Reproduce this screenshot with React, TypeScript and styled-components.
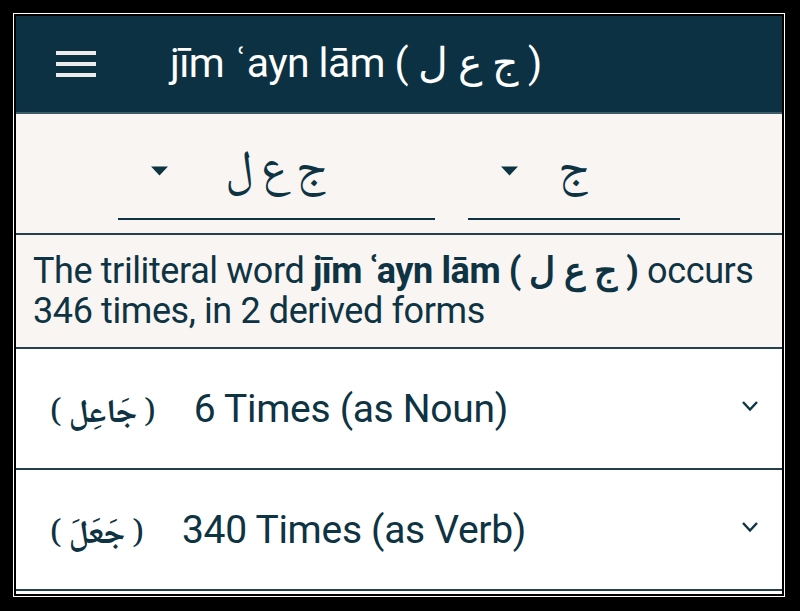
import React from "react";
import styled, { createGlobalStyle } from "styled-components";

const Global = createGlobalStyle`
  html, body { margin: 0; padding: 0; background: #000; }
  body { width: 800px; height: 611px; overflow: hidden; font-family: Roboto, "Noto Sans", sans-serif; }
`;

const INK = "#0e3342";
const ARABIC = `"Noto Naskh Arabic", "Noto Sans Arabic", "DejaVu Sans", serif`;

const Frame = styled.div`
  margin: 13px;
  width: 772px;
  height: 584px;
  box-sizing: border-box;
  border: 1px solid #fff;
  padding: 2px;
  background: #000;
`;

const Screen = styled.div`
  height: 100%;
  display: flex;
  flex-direction: column;
  background: #fff;
  overflow: hidden;
`;

const Header = styled.header`
  height: 98px;
  flex: none;
  box-sizing: border-box;
  background: #0b3142;
  border-bottom: 2px solid #3e5b68;
  display: flex;
  align-items: center;
  padding-left: 40px;
  gap: 74px;
`;

const Title = styled.h1`
  margin: 0 0 2px;
  color: #fff;
  font-family: Roboto, sans-serif;
  font-weight: 400;
  font-size: 41px;
  letter-spacing: -0.6px;
`;

const Selectors = styled.section`
  height: 121px;
  flex: none;
  box-sizing: border-box;
  background: #f8f5f2;
  border-bottom: 2px solid #23404c;
  display: flex;
  justify-content: center;
  align-items: flex-end;
  gap: 33px;
  padding-bottom: 13px;
`;

const Dropdown = styled.div<{ $w: number }>`
  width: ${(p) => p.$w}px;
  height: 82px;
  box-sizing: border-box;
  border-bottom: 2px solid ${INK};
  display: flex;
  align-items: center;
  padding-left: 32px;
`;

const CaretBox = styled.div`
  flex: none;
  display: flex;
  margin-bottom: 14px;
`;

const DropValue = styled.div`
  flex: 1;
  text-align: center;
  padding-right: 52px;
  font-family: ${ARABIC};
  font-size: 48px;
  color: ${INK};
  line-height: 1;
  padding-bottom: 10px;
  word-spacing: -4px;
`;

const Summary = styled.section`
  height: 114px;
  flex: none;
  box-sizing: border-box;
  background: #f8f5f2;
  border-bottom: 2px solid #23404c;
  display: flex;
  align-items: center;
  padding: 0 17px;
`;

const SummaryText = styled.p`
  margin: 0;
  color: ${INK};
  font-size: 36px;
  line-height: 40px;
  letter-spacing: -0.4px;
  b { font-weight: 700; }
`;

const FormRow = styled.div`
  height: 121px;
  flex: none;
  box-sizing: border-box;
  background: #fff;
  border-bottom: 2px solid #23404c;
  display: flex;
  align-items: center;
  padding: 0 22px 0 34px;
  gap: 38px;
`;

const FormArabic = styled.span`
  font-family: ${ARABIC};
  font-size: 33px;
  font-weight: 400;
  color: ${INK};
  unicode-bidi: isolate;
  padding-top: 12px;
  b { font-weight: 700; }
`;

const FormLabel = styled.span`
  flex: 1;
  font-size: 39px;
  color: ${INK};
  letter-spacing: -0.3px;
`;

const ChevronBox = styled.div`
  display: flex;
  margin-bottom: 6px;
`;

const Menu = () => (
  <svg width="40" height="28" viewBox="0 0 40 28" aria-hidden>
    <rect x="0" y="1" width="40" height="4" fill="#ececec" />
    <rect x="0" y="12" width="40" height="4" fill="#ececec" />
    <rect x="0" y="23" width="40" height="4" fill="#ececec" />
  </svg>
);

const Caret = () => (
  <CaretBox>
    <svg width="19" height="10" viewBox="0 0 19 10" aria-hidden>
      <path d="M1 0.5 L18 0.5 L9.5 9.5 Z" fill={INK} />
    </svg>
  </CaretBox>
);

const Chevron = () => (
  <ChevronBox>
    <svg width="20" height="12" viewBox="0 0 20 12" aria-hidden>
      <path d="M3 2 L10 9.5 L17 2" fill="none" stroke={INK} strokeWidth="2.4" />
    </svg>
  </ChevronBox>
);

const forms = [
  { ar: "جَاعِل", label: "6 Times (as Noun)" },
  { ar: "جَعَلَ", label: "340 Times (as Verb)" },
];

export default function App() {
  return (
    <>
      <Global />
      <Frame>
        <Screen>
          <Header>
            <Menu />
            <Title>jīm ʿayn lām ( ج ع ل )</Title>
          </Header>
          <Selectors>
            <Dropdown $w={317}>
              <Caret />
              <DropValue dir="rtl">ج‌ ع‌ ل</DropValue>
            </Dropdown>
            <Dropdown $w={212}>
              <Caret />
              <DropValue dir="rtl">ج</DropValue>
            </Dropdown>
          </Selectors>
          <Summary>
            <SummaryText>
              The triliteral word <b>jīm ʿayn lām ( ج ع ل )</b> occurs 346 times, in 2 derived forms
            </SummaryText>
          </Summary>
          {forms.map((f) => (
            <FormRow key={f.label}>
              <FormArabic dir="rtl">
                ( <b>{f.ar}</b> )
              </FormArabic>
              <FormLabel>{f.label}</FormLabel>
              <Chevron />
            </FormRow>
          ))}
        </Screen>
      </Frame>
    </>
  );
}
